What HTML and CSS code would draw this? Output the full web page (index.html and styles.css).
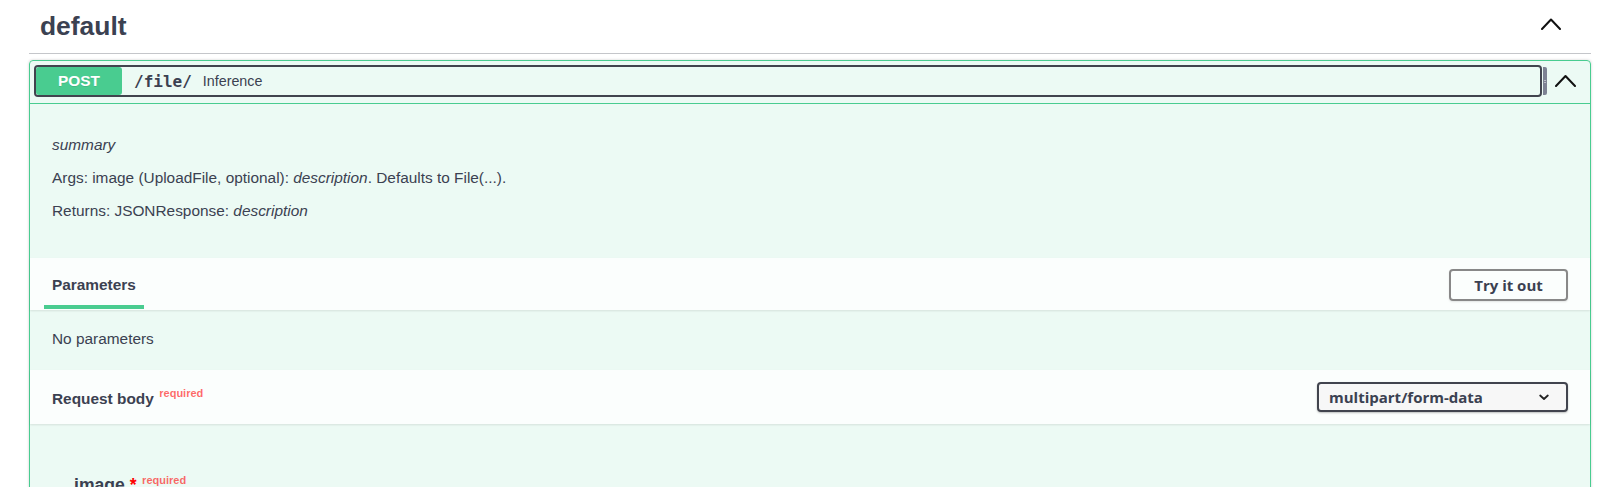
FILE: index.html
```html
<!DOCTYPE html>
<html lang="en">
<head>
<meta charset="utf-8">
<title>default</title>
<link rel="stylesheet" href="styles.css">
</head>
<body>
<div class="wrapper">
  <section class="tag-section">
    <h3 class="tag">
      <span class="tag-name">default</span>
      <button class="tag-toggle" aria-label="Collapse operation">
        <svg width="20" height="12" viewBox="0 0 20 12"><polyline points="1,11 10,1.5 19,11"/></svg>
      </button>
    </h3>
    <div class="opblock">
      <div class="summary">
        <div class="summary-control">
          <span class="method">POST</span>
          <span class="path">/file/</span>
          <span class="summary-desc">Inference</span>
        </div>
        <span class="copy-bar"><span class="copy-mark"></span></span>
        <button class="op-toggle" aria-label="Collapse">
          <svg width="21" height="13" viewBox="0 0 21 13"><polyline points="1,12 10.5,2 20,12"/></svg>
        </button>
      </div>
      <div class="description">
        <p><i>summary</i></p>
        <p>Args: image (UploadFile, optional): <i>description</i>. Defaults to File(...).</p>
        <p>Returns: JSONResponse: <i>description</i></p>
      </div>
      <div class="section-header params-header">
        <div class="tab"><h4>Parameters</h4></div>
        <button class="try">Try it out</button>
      </div>
      <div class="params-body">No parameters</div>
      <div class="section-header rb-header">
        <h4 class="rb-title">Request body<span class="req">required</span></h4>
        <div class="select" role="listbox">
          <span>multipart/form-data</span>
          <svg width="10" height="7" viewBox="0 0 10 7"><polyline points="1.2,1.5 5,5 8.8,1.5"/></svg>
        </div>
      </div>
      <div class="rb-body">
        <div class="param-name">image<span class="star">&nbsp;*</span><span class="req">required</span></div>
        <div class="param-type">string($binary)</div>
      </div>
    </div>
  </section>
</div>
</body>
</html>
```
FILE: styles.css
```css
* { box-sizing: border-box; }
html, body {
  margin: 0;
  padding: 0;
  background: #fff;
  height: 100%;
  overflow: hidden;
}
body {
  font-family: "Liberation Sans", Arial, sans-serif;
  color: #3b4151;
}
button {
  font: inherit;
  background: none;
  border: 0;
  padding: 0;
  cursor: pointer;
  color: inherit;
}
.wrapper {
  padding: 0 30px 0 29px;
}
.tag {
  margin: 0;
  height: 54px;
  border-bottom: 1px solid rgba(59, 65, 81, .3);
  display: flex;
  align-items: center;
  justify-content: space-between;
  padding: 0 31px 1px 11px;
  font-size: 26.4px;
  font-weight: 700;
  line-height: 30px;
}
.tag-toggle {
  display: flex;
  margin-bottom: 4px;
  margin-right: -1px;
}
.tag-toggle svg polyline,
.op-toggle svg polyline {
  fill: none;
  stroke: #111;
  stroke-width: 2;
  stroke-linecap: round;
  stroke-linejoin: round;
}
.opblock {
  margin-top: 6px;
  border: 1px solid #49cc90;
  border-radius: 4px;
  background: rgba(73, 204, 144, .1);
  box-shadow: 0 0 3px rgba(0, 0, 0, .19);
}
.summary {
  display: flex;
  align-items: center;
  padding: 4px 0 6px 4px;
  border-bottom: 1px solid #49cc90;
}
.summary-control {
  flex: 1;
  display: flex;
  align-items: center;
  height: 32px;
  border: 2px solid #41444e;
  border-radius: 4px;
}
.method {
  width: 86px;
  height: 28px;
  background: #49cc90;
  color: #fff;
  font-weight: 700;
  font-size: 15.4px;
  border-radius: 3px;
  display: flex;
  align-items: center;
  justify-content: center;
  text-shadow: 0 1px 0 rgba(0, 0, 0, .1);
}
.path {
  font-family: "DejaVu Sans Mono", "Liberation Mono", monospace;
  font-weight: 700;
  font-size: 16px;
  padding: 0 11px 0 12px;
}
.summary-desc {
  font-size: 14.3px;
}
.copy-bar {
  width: 4px;
  height: 28px;
  margin-left: 1px;
  background: #7d8293;
  border-radius: 0 2px 2px 0;
  display: flex;
  align-items: center;
  justify-content: center;
}
.copy-mark {
  width: 2px;
  height: 3px;
  border-top: 1px solid #b9bcc6;
  border-bottom: 1px solid #b9bcc6;
}
.op-toggle {
  display: flex;
  margin: 0 14px 1px 8px;
}
.description {
  padding: 32px 22px 38px;
  font-size: 15.4px;
  line-height: 18px;
  display: flex;
  flex-direction: column;
  gap: 15px;
}
.description p {
  margin: 0;
}
.section-header {
  background: rgba(255, 255, 255, .8);
  box-shadow: 0 1px 2px rgba(0, 0, 0, .1);
  display: flex;
  align-items: center;
  justify-content: space-between;
  padding: 0 22px;
}
.params-header {
  height: 52px;
  padding-top: 2px;
}
.tab {
  align-self: flex-end;
  margin-bottom: 1px;
  display: flex;
  flex-direction: column;
  align-items: center;
}
.tab h4 {
  margin: 0;
  font-size: 15.4px;
  line-height: 18px;
}
.tab::after {
  content: "";
  width: 120%;
  height: 4px;
  margin-top: 11px;
  background: #49cc90;
  flex: none;
}
.try {
  font-family: "Open Sans", "Liberation Sans", sans-serif;
  font-weight: 700;
  font-size: 15px;
  color: #3b4151;
  border: 2px solid #888;
  border-radius: 4px;
  height: 32px;
  width: 119px;
  box-shadow: 0 1px 2px rgba(0, 0, 0, .1);
}
.params-body {
  height: 60px;
  padding: 20px 22px 0;
  font-size: 15.4px;
  line-height: 18px;
}
.rb-header {
  height: 54px;
}
.rb-title {
  margin: 0 0 3px;
  font-size: 15.4px;
  font-weight: 700;
  line-height: 18px;
}
.req {
  font-size: 11px;
  font-weight: 700;
  color: rgba(255, 0, 0, .6);
  padding-left: 5.5px;
  vertical-align: 6.6px;
}
.select {
  width: 251px;
  height: 30px;
  border: 2px solid #41444e;
  border-radius: 4px;
  background: #f7f7f7;
  box-shadow: 0 1px 2px 0 rgba(0, 0, 0, .25);
  display: flex;
  align-items: center;
  justify-content: space-between;
  padding: 0 17px 0 10px;
  font-family: "Open Sans", "Liberation Sans", sans-serif;
  font-weight: 700;
  font-size: 15px;
  color: #3b4151;
}
.select svg polyline {
  fill: none;
  stroke: #222;
  stroke-width: 1.8;
  stroke-linecap: round;
  stroke-linejoin: round;
}
.rb-body {
  padding: 46px 22px 40px 44px;
}
.param-name {
  font-size: 17.6px;
  font-weight: 700;
  line-height: 20px;
}
.star {
  color: red;
}
.param-type {
  font-size: 13px;
  padding-top: 6px;
}
```
